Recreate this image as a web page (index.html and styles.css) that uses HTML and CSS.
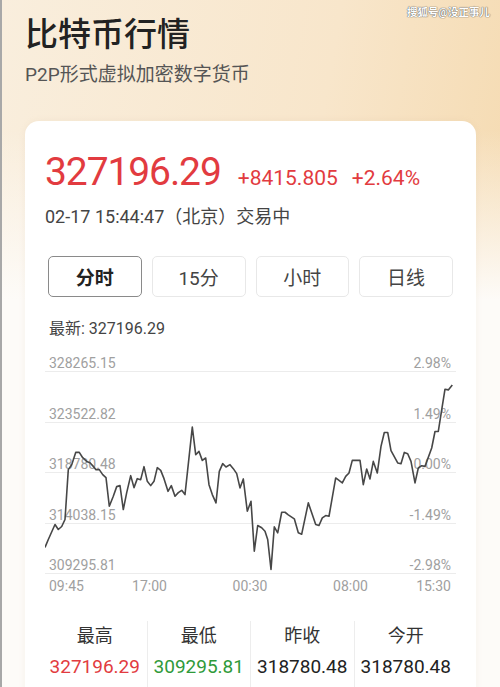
FILE: index.html
```html
<!DOCTYPE html>
<html lang="zh-CN">
<head>
    <meta charset="utf-8">
    <title>比特币行情</title>
    <link rel="stylesheet" href="styles.css">
</head>
<body>
    <div class="page">
        <div class="watermark">搜狐号@没正事儿</div>

        <header class="head">
            <h1 class="title">比特币行情</h1>
            <p class="subtitle">P2P形式虚拟加密数字货币</p>
        </header>

        <div class="card">
            <div class="quote">
                <span class="price">327196.29</span>
                <span class="change">+8415.805</span>
                <span class="change">+2.64%</span>
            </div>
            <div class="time">02-17 15:44:47（北京）交易中</div>

            <div class="tabs">
                <button class="tab active">分时</button>
                <button class="tab">15分</button>
                <button class="tab">小时</button>
                <button class="tab">日线</button>
            </div>

            <div class="latest">最新: 327196.29</div>

            <div class="chart">
                <div class="grid-row first"><span>328265.15</span><span>2.98%</span></div>
                <div class="grid-row"><span>323522.82</span><span>1.49%</span></div>
                <div class="grid-row"><span>318780.48</span><span>0.00%</span></div>
                <div class="grid-row"><span>314038.15</span><span>-1.49%</span></div>
                <div class="grid-row"><span>309295.81</span><span>-2.98%</span></div>

                <svg class="line" viewBox="45 352 411 223" preserveAspectRatio="none">
                    <polyline fill="none" stroke="#474747" stroke-width="1.6" stroke-linejoin="round"
                        points="45,548 48.3,540 55,525 58.3,530 61.7,527 65,520 68.3,470 71.7,465 75.7,452.7 79.3,452.7 82.7,458 86.7,461.7 90,463 93.3,466.7 96,470 99.3,470 102.7,475 106,478 109.3,506.7 113.3,496.7 116.7,487 120,486 123.3,510 126.7,493 130.7,476 134,488 137.3,479 140.7,480 144,467 147.3,481.7 150.7,486 154,481.7 157.3,468 160.7,470.7 164,479 168,491.7 171.3,486 175,496.7 178.3,493 181.7,490.7 185,495 192.3,427.3 195.7,455 199,451.7 202.3,460.7 205.7,458.3 209,485 212.3,495 216,503.3 219.3,471.7 222.7,464 226,467.3 230,465 233.3,469 236.7,474 240,488.3 243.3,479.3 247.3,511.7 251,501.7 254.3,551.7 257.7,526 261.7,528.3 265,531.7 267.7,540 271,570 274.3,527.3 277.7,533.3 281.7,512.7 285,512.7 288.3,515.3 294.3,519.3 298.3,533.3 301.7,534.7 308.3,503.3 315.7,525 319,526 322.3,518.3 325.7,516 329,516.7 335.7,478.3 342.3,483.3 345.7,476.7 349,473.3 352.3,460.7 360,460.7 363.3,485 366.7,469.3 370,479.3 373.3,461.7 377.3,473.3 381,446.7 384.3,432.7 387.7,432.7 391,451 397.7,463.3 401,464 404.3,452.7 407.7,454 411,461.7 415,483.3 418.3,468.3 421.7,466 425,466.7 431.7,448.3 435,431.7 438.3,431.7 441.7,410 445,389.3 448.3,390 452.3,385"/>
                </svg>
            </div>

            <div class="axis">
                <span class="tick start">09:45</span>
                <span class="tick q1">17:00</span>
                <span class="tick q2">00:30</span>
                <span class="tick q3">08:00</span>
                <span class="tick end">15:30</span>
            </div>

            <div class="stats">
                <div class="stat">
                    <div class="stat-label">最高</div>
                    <div class="stat-value up">327196.29</div>
                </div>
                <div class="stat">
                    <div class="stat-label">最低</div>
                    <div class="stat-value down">309295.81</div>
                </div>
                <div class="stat">
                    <div class="stat-label">昨收</div>
                    <div class="stat-value">318780.48</div>
                </div>
                <div class="stat">
                    <div class="stat-label">今开</div>
                    <div class="stat-value">318780.48</div>
                </div>
            </div>
        </div>
    </div>
</body>
</html>
```

FILE: styles.css
```css
body {
    margin: 0;
    font-family: Roboto, "Noto Sans CJK SC", sans-serif;
    color: #333;
    background: #fff;
}
.page {
    position: relative;
    height: 687px;
    overflow: hidden;
    border-left: 2px solid #a8a8a8;
    background:
        linear-gradient(180deg, rgba(255,255,255,0) 0, rgba(255,255,255,0) 130px, #fdfbf8 300px),
        linear-gradient(100deg, #f9eedd 0%, #f8e6cb 55%, #f4d7a9 100%);
}
.watermark {
    position: absolute;
    top: 4px;
    right: 10px;
    font-size: 10.5px;
    font-weight: 700;
    color: #fff;
    text-shadow: 0 0 1px #555, 0 0 1px #555;
}
.head {
    padding: 15px 0 0 23px;
}
.title {
    margin: 0;
    font-size: 33px;
    line-height: 40px;
    font-weight: 500;
    color: #222;
}
.subtitle {
    margin: 7px 0 0;
    font-size: 19px;
    line-height: 26px;
    color: #555;
}
.card {
    margin: 33px 24px 0 23px;
    padding: 27px 20px 0 20px;
    background: #fff;
    border-radius: 14px 14px 0 0;
    height: 600px;
    box-shadow: 0 0 6px rgba(200, 170, 130, 0.12);
}
.quote {
    display: flex;
    align-items: baseline;
    height: 48px;
    color: #e23b40;
}
.price {
    font-size: 39px;
    line-height: 48px;
    letter-spacing: -1.1px;
    margin-right: 17px;
}
.change {
    font-size: 21px;
    margin-right: 14px;
}
.time {
    margin-top: 9px;
    font-size: 18px;
    line-height: 24px;
    color: #444;
}
.tabs {
    display: grid;
    grid-template-columns: repeat(4, 1fr);
    gap: 10px;
    margin: 27px 3px 0;
}
.tab {
    height: 41px;
    border: 1px solid #e8e8e8;
    border-radius: 5px;
    background: #fff;
    font-family: Roboto, "Noto Sans CJK SC", sans-serif;
    font-size: 19px;
    color: #444;
}
.tab.active {
    border-color: #8a8a8a;
    color: #222;
    font-weight: 700;
}
.latest {
    margin-top: 21px;
    padding-left: 4px;
    font-size: 16px;
    line-height: 22px;
    color: #444;
}
.chart {
    position: relative;
    margin-top: 12px;
}
.grid-row {
    display: flex;
    justify-content: space-between;
    align-items: flex-end;
    box-sizing: border-box;
    height: 50.6px;
    padding: 0 5px 0 4px;
    border-bottom: 1px solid #ececec;
    font-size: 14px;
    line-height: 16px;
    color: #a0a0a0;
}
.grid-row.first {
    height: 20px;
}
.line {
    position: absolute;
    top: 0;
    left: 0;
    width: 100%;
    height: 100%;
}
.axis {
    display: grid;
    grid-template-columns: repeat(8, 1fr);
    margin-top: 4px;
    padding: 0 5px 0 4px;
    font-size: 14px;
    line-height: 16px;
    color: #a0a0a0;
}
.tick {
    text-align: center;
}
.tick.start {
    grid-column: 1;
    text-align: left;
}
.tick.q1 {
    grid-column: 2 / 4;
}
.tick.q2 {
    grid-column: 4 / 6;
}
.tick.q3 {
    grid-column: 6 / 8;
}
.tick.end {
    grid-column: 8;
    text-align: right;
}
.stats {
    display: grid;
    grid-template-columns: repeat(4, 1fr);
    margin: 27px -1px 0 -2px;
}
.stat {
    text-align: center;
    padding-top: 3px;
    height: 80px;
}
.stat + .stat {
    border-left: 1px solid #ededed;
}
.stat-label {
    font-size: 18px;
    line-height: 24px;
    color: #333;
}
.stat-value {
    margin-top: 7px;
    font-size: 19px;
    line-height: 24px;
    color: #222;
}
.stat-value.up {
    color: #e23b40;
}
.stat-value.down {
    color: #2f9a3a;
}
```
